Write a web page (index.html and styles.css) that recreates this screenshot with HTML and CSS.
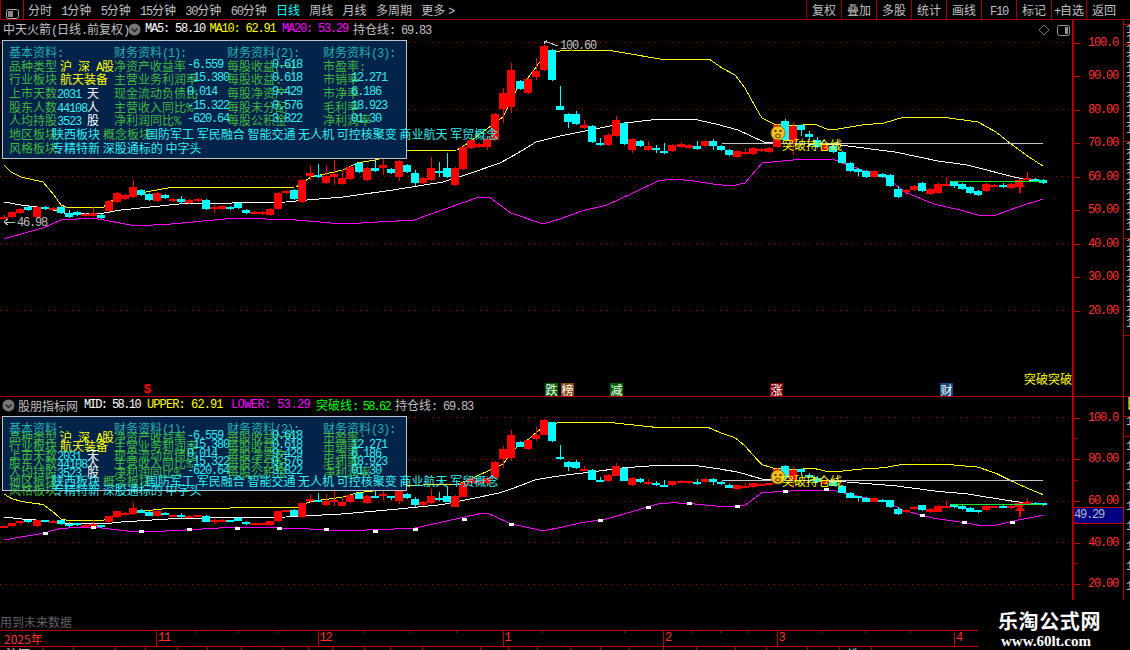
FILE: index.html
```html
<!DOCTYPE html>
<html lang="zh-CN">
<head>
    <meta charset="UTF-8">
    <title>中天火箭 K线</title>
    <link rel="stylesheet" href="styles.css">
</head>
<body>
    <div class="app">
        <!-- Top toolbar -->
        <div class="toolbar">
            <div class="toolbar-toggle">
                <svg width="13" height="10" viewBox="0 0 13 10"><rect x="0.5" y="0.5" width="12" height="9" rx="2" fill="none" stroke="#aaa"/><rect x="2" y="2" width="5" height="6" fill="#888"/></svg>
            </div>
            <div class="periods">
                <span>分时</span>
                <span><b>1</b>分钟</span>
                <span><b>5</b>分钟</span>
                <span><b>15</b>分钟</span>
                <span><b>30</b>分钟</span>
                <span><b>60</b>分钟</span>
                <span class="active">日线</span>
                <span>周线</span>
                <span>月线</span>
                <span>多周期</span>
                <span>更多 <b>&gt;</b></span>
            </div>
            <div class="actions">
                <span>复权</span>
                <span>叠加</span>
                <span>多股</span>
                <span>统计</span>
                <span>画线</span>
                <span><b>F10</b></span>
                <span>标记</span>
                <span><b>+</b>自选</span>
                <span>返回</span>
            </div>
        </div>

        <div class="workspace">
            <div class="panes">
                <!-- Main chart -->
                <div class="pane pane-main">
                    <div class="plot">
                        <svg class="chart" id="chartMain"></svg>
                        <div class="legend legend-main">
                            <span class="legend-title">中天火箭<b>(</b>日线<b>.</b>前复权<b>)</b></span>
                            <svg class="legend-icon" width="13" height="13" viewBox="0 0 13 13"><circle cx="6.5" cy="6.5" r="6" fill="#777"/><path d="M3.5 5.5 L6.5 8.5 L9.5 5.5" fill="none" stroke="#222" stroke-width="1.5"/></svg>
                            <b class="item-ma5 c-white">MA5: 58.10</b>
                            <b class="item-ma10 c-yellow">MA10: 62.91</b>
                            <b class="item-ma20 c-magenta">MA20: 53.29</b>
                            <span class="c-grey">持仓线<b>: 69.83</b></span>
                        </div>
                        <div class="chart-tools">
                            <svg width="12" height="12" viewBox="0 0 12 12"><path d="M6 1 L11 6 L6 11 L1 6 Z" fill="none" stroke="#777"/></svg>
                            <svg width="13" height="11" viewBox="0 0 13 11"><rect x="0.5" y="0.5" width="12" height="10" rx="2" fill="none" stroke="#999"/><rect x="8" y="2" width="3" height="7" fill="#999"/></svg>
                        </div>
                        <div class="panel" id="infoPanel">
                            <div class="panel-row heading">
                                <span>基本资料<b>:</b></span><span></span>
                                <span>财务资料<b>(1):</b></span><span></span>
                                <span>财务资料<b>(2):</b></span><span></span>
                                <span>财务资料<b>(3):</b></span>
                            </div>
                            <div class="panel-row">
                                <span class="lbl">品种类型</span><span class="val-name">沪<b> </b>深<b> A</b>股</span>
                                <span class="lbl">净资产收益率</span><b class="val">-6.559</b>
                                <span class="lbl">每股收益(一)</span><b class="val">0.618</b>
                                <span class="lbl">市盈率<b>:</b></span>
                            </div>
                            <div class="panel-row">
                                <span class="lbl">行业板块</span><span class="val-name">航天装备</span>
                                <span class="lbl">主营业务利润率</span><b class="val">-15.380</b>
                                <span class="lbl">每股收益<b>:</b></span><b class="val">0.618</b>
                                <span class="lbl">市销率</span><b class="val">12.271</b>
                            </div>
                            <div class="panel-row">
                                <span class="lbl">上市天数</span><span><b class="val">2031 </b><span class="unit">天</span></span>
                                <span class="lbl">现金流动负债比</span><b class="val">0.014</b>
                                <span class="lbl">每股净资产</span><b class="val">9.429</b>
                                <span class="lbl">市净率</span><b class="val">6.186</b>
                            </div>
                            <div class="panel-row">
                                <span class="lbl">股东人数</span><span><b class="val">44108</b><span class="unit">人</span></span>
                                <span class="lbl">主营收入同比<b>%</b></span><b class="val">-15.322</b>
                                <span class="lbl">每股未分配</span><b class="val">0.576</b>
                                <span class="lbl">毛利率</span><b class="val">18.923</b>
                            </div>
                            <div class="panel-row">
                                <span class="lbl">人均持股</span><span><b class="val">3523 </b><span class="unit">股</span></span>
                                <span class="lbl">净利润同比<b>%</b></span><b class="val">-620.64</b>
                                <span class="lbl">每股公积金</span><b class="val">3.822</b>
                                <span class="lbl">净利润率</span><b class="val">01.30</b>
                            </div>
                            <div class="panel-row panel-row-wide">
                                <span class="lbl">地区板块</span><span class="val">陕西板块</span>
                                <span class="lbl">概念板块</span><span class="val">国防军工 军民融合 智能交通 无人机 可控核聚变 商业航天 军贸概念</span>
                            </div>
                            <div class="panel-row panel-row-wide">
                                <span class="lbl">风格板块</span><span class="val">专精特新 深股通标的 中字头</span>
                            </div>
                        </div>
                        <span class="break-tag">突破突破</span>
                    </div>
                    <div class="axis" id="axisMain"></div>
                </div>

                <!-- Indicator chart -->
                <div class="pane pane-sub">
                    <div class="plot">
                        <svg class="chart" id="chartSub"></svg>
                        <div class="legend legend-sub">
                            <svg class="legend-icon" width="13" height="13" viewBox="0 0 13 13"><circle cx="6.5" cy="6.5" r="6" fill="#777"/><path d="M3.5 5.5 L6.5 8.5 L9.5 5.5" fill="none" stroke="#222" stroke-width="1.5"/></svg>
                            <span class="legend-title item-name">股朋指标网</span>
                            <b class="item-mid c-white">MID: 58.10</b>
                            <b class="item-upper c-yellow">UPPER: 62.91</b>
                            <b class="item-lower c-magenta">LOWER: 53.29</b>
                            <span class="item-break c-green">突破线<b>: 58.62</b></span>
                            <span class="c-grey">持仓线<b>: 69.83</b></span>
                        </div>
                        <div class="panel panel-squashed" id="infoPanelSub"></div>
                        <span class="future-note">用到未来数据</span>
                    </div>
                    <div class="axis" id="axisSub">
                        <b class="cursor-price">49.29</b>
                    </div>
                </div>
            </div>
            <div class="side" id="side"></div>
        </div>

        <!-- Time axis -->
        <div class="timebar" id="timebar">
            <span class="month month-first">2025年</span>
            <b class="month month-11">11</b>
            <b class="month month-12">12</b>
            <b class="month month-1">1</b>
            <b class="month month-2">2</b>
            <b class="month month-3">3</b>
            <b class="month month-4">4</b>
        </div>
        <div class="statusbar" id="statusbar"></div>

        <div class="watermark">
            <div class="watermark-title">乐淘公式网</div>
            <div class="watermark-url">www.60lt.com</div>
        </div>
    </div>

    <script src="chart.js"></script>
</body>
</html>
```

FILE: styles.css
```css
* {
    box-sizing: border-box;
}
body {
    margin: 0;
    background: #000;
    color: #c0c0c0;
    font-family: "Noto Sans CJK SC", "Liberation Sans", sans-serif;
    font-size: 12px;
    overflow: hidden;
}
/* Half-width latin and digits, the way the terminal font draws them */
b {
    font-family: "Liberation Mono", monospace;
    font-weight: normal;
    letter-spacing: -1.2px;
    white-space: pre;
}
.app {
    position: relative;
    width: 1130px;
    height: 650px;
    overflow: hidden;
}
/* Toolbar */
.toolbar {
    display: flex;
    height: 20px;
    line-height: 19px;
    border-bottom: 1px solid #a00000;
    white-space: nowrap;
}
.toolbar-toggle {
    width: 24px;
    padding: 4px 0 0 5px;
    border-left: 1px solid #a00000;
    border-right: 1px solid #c00000;
}
.periods {
    display: flex;
    gap: 9.3px;
    padding-left: 4px;
}
.periods .active {
    color: #00ffff;
}
.actions {
    display: flex;
    margin-left: auto;
    padding-right: 9px;
}
.actions span {
    width: 35px;
    text-align: center;
    border-left: 1px solid #a00000;
}
/* Panes */
.workspace {
    display: flex;
    height: 610px;
}
.panes {
    width: 1123px;
}
.pane {
    display: flex;
    position: relative;
}
.pane-main {
    height: 377px;
    border-bottom: 1px solid #b00000;
}
.pane-sub {
    height: 233px;
}
.plot {
    position: relative;
    width: 1072px;
    overflow: hidden;
}
.chart {
    position: absolute;
    left: 0;
    top: 0;
    width: 1072px;
    height: 100%;
}
.legend {
    position: relative;
    display: flex;
    align-items: center;
    white-space: nowrap;
}
.legend-main {
    height: 18px;
    padding-left: 3px;
}
.legend-main .legend-icon {
    margin: 0 4px 0 5px;
}
.legend-sub {
    height: 16px;
    padding-left: 2px;
}
.legend-sub .legend-icon {
    margin-right: 3px;
}
.legend-title {
    width: 120px;
}
.item-name { width: 66px; }
.item-ma5 { width: 64.5px; }
.item-ma10 { width: 72.5px; }
.item-ma20 { width: 71px; }
.item-mid { width: 63px; letter-spacing: -1.6px; }
.item-upper { width: 84px; letter-spacing: -0.9px; }
.item-lower { width: 85px; letter-spacing: -0.6px; }
.item-break { width: 79px; }
.item-break b { letter-spacing: -1.8px; }
.c-white { color: #fff; }
.c-yellow { color: #ffff00; }
.c-magenta { color: #ff00ff; }
.c-green { color: #00ff00; }
.c-grey { color: #c0c0c0; }
.chart-tools {
    position: absolute;
    top: 4px;
    left: 1038px;
    display: flex;
    align-items: center;
    gap: 7px;
}
/* Info panel over the candles */
.panel {
    position: absolute;
    left: 2px;
    top: 20px;
    width: 405px;
    height: 119px;
    padding: 4px 0 0 6px;
    background: #02234a;
    border: 1px solid #bcc4cc;
    color: #30f0f0;
}
.panel-row {
    display: grid;
    grid-template-columns: 48px 57px 73px 40px 45px 51px 28px auto;
    height: 13.7px;
    line-height: 13.7px;
    white-space: nowrap;
}
.panel-row-wide {
    grid-template-columns: 43px 51px 43px auto;
}
.panel-row-wide + .panel-row-wide {
    grid-template-columns: 43px auto;
}
.panel-squashed {
    top: 19px;
    height: 75px;
}
.panel-squashed .panel-row {
    height: 8.86px;
}
.heading {
    color: #20b0b0;
}
.lbl {
    color: #40b840;
}
.val {
    color: #30f0f0;
}
span.val {
    letter-spacing: 0;
}
.val-name {
    padding-left: 3px;
    color: #ffff00;
}
.unit {
    color: #fff;
}
.break-tag {
    position: absolute;
    right: 0;
    top: 350px;
    color: #ffff00;
}
.future-note {
    position: absolute;
    left: 0;
    bottom: 0;
    line-height: 16px;
    color: #606060;
}
/* Badges along the bottom of the main chart */
.badge {
    position: absolute;
    top: 363px;
    width: 13px;
    height: 13px;
    line-height: 13px;
    text-align: center;
    color: #fff;
}
.badge-drop { background: #006400; }
.badge-rank { background: #8a4a10; }
.badge-cut { background: #006400; }
.badge-rise { background: #800000; }
.badge-money { background: #104a80; }
.badge-dollar {
    color: #ff0000;
    font-family: "Liberation Mono", monospace;
    font-weight: bold;
    font-size: 13px;
}
/* Price axis */
.axis {
    position: relative;
    width: 51px;
    border-left: 2px solid #b00000;
}
.axis-tick {
    position: absolute;
    left: 0;
    height: 1px;
    background: #c00000;
}
.axis-label {
    position: absolute;
    left: 14px;
    line-height: 14px;
    color: #ff3232;
}
.cursor-price {
    position: absolute;
    left: 0;
    top: 110px;
    width: 49px;
    height: 17px;
    line-height: 15px;
    background: #000080;
    border-top: 1px solid #c00000;
    border-bottom: 1px solid #c00000;
    color: #b8b8c8;
}
/* Clipped list at the far right */
.side {
    width: 7px;
    height: 580px;
    overflow: hidden;
    border-left: 1px solid #b00000;
}
.side-section {
    padding-left: 2px;
    overflow: hidden;
    border-bottom: 1px solid #b00000;
    color: #c0c0c0;
    line-height: 10px;
}
.side-section b {
    display: block;
}
.side-flag {
    color: #ffff00;
    font-size: 14px;
}
.side-rows {
    border-bottom: 0;
    line-height: 20px;
}
/* Time axis */
.timebar {
    position: relative;
    display: flex;
    height: 17px;
    line-height: 15px;
    width: 978px;
    color: #ff3232;
    border-top: 1px solid #c00000;
    border-bottom: 1px solid #c00000;
}
.month {
    padding-left: 1px;
    border-left: 1px solid #c00000;
}
.month-first { width: 156px; padding-left: 4px; border-left: 0; }
.month-11 { width: 161.5px; }
.month-12 { width: 185px; }
.month-1 { width: 160.5px; }
.month-2 { width: 113.5px; }
.month-3 { width: 177.5px; }
.month-4 { width: 24px; }
.time-tick {
    position: absolute;
    top: 0;
    width: 1px;
    height: 2px;
    background: #c00000;
}
.statusbar {
    position: relative;
    height: 4px;
    overflow: hidden;
}
.status-cell {
    position: absolute;
    top: 0;
    width: 1px;
    height: 4px;
    background: #c00000;
}
.status-text {
    position: absolute;
    top: 1px;
    line-height: 12px;
    color: #e0e0e0;
}
.status-text-cyan {
    color: #80ffff;
}
/* Watermark */
.watermark {
    position: absolute;
    left: 978px;
    top: 600px;
    right: 0;
    bottom: 0;
    padding: 9px 0 0 20px;
    background: #000;
    color: #fff;
}
.watermark-title {
    font-size: 20px;
    font-weight: bold;
    line-height: 24px;
    letter-spacing: 0.6px;
}
.watermark-url {
    padding: 1px 0 0 3px;
    font-family: "Liberation Serif", serif;
    font-size: 15px;
    font-weight: bold;
    line-height: 15px;
}
/* SVG annotations */
.chart-price {
    fill: #c0c0c0;
    font-family: "Liberation Mono", monospace;
    font-size: 12px;
    letter-spacing: -1.2px;
}
.chart-note {
    fill: #ffff00;
    font-size: 12px;
}
```

FILE: chart.js
```js
// All y values below are pixels in the main pane, the sub pane is scaled from them
const SVG_NS = "http://www.w3.org/2000/svg";
const RED = "#ff0000";
const CYAN = "#00ffff";

// [colour, body top, body bottom, wick top, wick bottom]
const candles = [
    ["r",216.5,217.5,215,219],["r",212,217],["r",209,213],["c",207,210],["r",207,217],["c",207,209],["r",208,209],["c",207,213],
    ["c",213,217,210,218],["c",212,215],["r",214,216],["r",213,216,207,217],["c",215,218],["r",201,211],["r",193,202],["r",195,199],
    ["r",187,197,180,198],["c",190,195],["c",194,200],["r",193,201],["c",195,198],["r",199,201],["c",199,202,196,204],["r",200,203],
    ["r",199,201],["c",200,209],["r",207,209,205,213],["r",206,209],["c",207,209],["c",203,208],["c",210,213],["r",212,213],
    ["r",212,214],["r",209,215],["r",193,209],["r",191,193],["c",190,199],["r",180,202],["r",173,176,165,180],["c",175,177,164,178],
    ["r",176,183,165,184],["r",174,177,160,185],["r",178,184,170,185],["r",167,179],["c",163,172],["r",168,180],["c",168,171,160,172],["r",165,168,157,175],
    ["c",169,173],["r",161,177,160,181],["c",165,172],["c",173,183,170,186],["r",178,183],["r",168,180,157,181],["c",171,172,162,177],["c",168,177,153,178],
    ["r",168,185],["r",147,169],["r",140,148],["r",144,147],["r",139,147,136,150],["r",114,140],["r",93,109,88,123],["r",70,107,63,113],
    ["c",81,89,80,90],["r",79,93],["r",71,77,58,80],["r",46,70],["c",50,80],["c",106,110,86,110],
    ["c",114,122,113,128],["c",114,124,111,125],["r",125,128,120,129],["c",126,142],["c",143,145,138,146],["r",135,145,133,146],["r",120,136,116,137],["c",123,144],
    ["r",139,150,138,153],["c",141,146],["r",146,150,141,151],["c",148,150,145,153],["c",151,153,143,154],["r",145,151],["r",144,147,142,148],["r",145,148],
    ["c",146,149,141,150],["r",141,146],["c",141,146,139,150],["c",146,150],["c",150,155],["r",151,157],["r",152,153,148,155],["r",148,154],
    ["r",149,151],["r",148,152],["r",125,147],["c",121,140,119,141],["r",126,142,122,155],["c",125,130,124,136],["c",134,137,131,140],["c",140,147,137,148],
    ["r",145,150],["c",146,152],["c",152,163],["c",163,171],["c",169,172,168,176],["c",171,177],["r",171,177],["c",174,177,173,178],
    ["c",175,186],["c",189,197,186,198],["r",190,192,189,195],["r",186,190],["c",183,191],["r",189,194],["r",184,193],["r",184,185,177,186],
    ["c",181,186,181,188],["c",184,189],["c",187,193],["c",191,195],["r",184,191],["r",185,186],["c",185,187,183,188],["r",184,188],
    ["r",180,187],["r",178,179,172,180],["c",179,181],["c",180,183]
];

const upperLine = [[4,165],[11,172],[21,177],[43,182],[54,195],[61,205],[66,207],[104,207],[107,202],[146,192],[168,188],[296,187],[311,177],[343,170],[357,163],[375,160],[407,151],[457,150],[468,143],[503,117],[518,87],[528,78],[539,63],[550,52],[560,51],[571,50],[613,51],[625,53],[660,59],[709,59],[722,68],[735,75],[745,88],[756,108],[762,118],[774,124],[793,126],[814,124],[827,129],[838,129],[862,125],[884,123],[904,117],[942,117],[978,122],[996,132],[1011,144],[1029,157],[1043,166]];
const midLine = [[4,202],[21,205],[46,208],[64,213],[104,213],[121,210],[179,204],[286,202],[307,200],[343,197],[393,190],[443,182],[471,173],[500,163],[518,153],[536,142],[560,136],[585,131],[625,123],[660,119],[693,119],[716,124],[738,130],[764,142],[778,143],[840,145],[895,152],[938,161],[967,165],[1014,177],[1029,180],[1043,182]];
const lowerLine = [[4,239],[21,234],[43,228],[61,220],[93,218],[136,226],[171,224],[236,218],[296,220],[343,224],[414,220],[479,197],[489,197],[511,213],[543,224],[560,219],[582,211],[607,205],[633,193],[658,181],[673,179],[694,181],[713,184],[731,186],[745,183],[762,163],[793,160],[833,159],[840,162],[862,170],[887,178],[905,192],[934,204],[960,210],[978,215],[996,215],[1018,207],[1043,199]];
// White squares on the lower band, sub pane pixels
const bandMarks = [[45,533],[93,527],[141,531],[189,529],[237,528],[279,528],[326,529],[375,531],[415,529],[464,519],[511,524],[600,520],[648,507],[689,503],[737,506],[785,491],[826,489],[922,515],[964,522],[1012,522]];

function add(svg, name, attrs, text) {
    const el = document.createElementNS(SVG_NS, name);
    for (const key in attrs) el.setAttribute(key, attrs[key]);
    if (text) el.textContent = text;
    svg.appendChild(el);
    return el;
}

function drawLine(svg, points, toY, color, width) {
    add(svg, "polyline", {
        points: points.map(p => p[0] + "," + toY(p[1]).toFixed(1)).join(" "),
        fill: "none",
        stroke: color,
        "stroke-width": width
    });
}

function drawSmiley(svg, cx, cy) {
    const g = add(svg, "g", { "shape-rendering": "auto" });
    add(g, "circle", { cx: cx, cy: cy, r: 7, fill: "#f0c020", stroke: "#a87808" });
    add(g, "rect", { x: cx - 3.5, y: cy - 3, width: 2, height: 2, fill: "#5a3a00" });
    add(g, "rect", { x: cx + 1.5, y: cy - 3, width: 2, height: 2, fill: "#5a3a00" });
    add(g, "ellipse", { cx: cx, cy: cy + 3, rx: 2.5, ry: 1.8, fill: "none", stroke: "#5a3a00" });
}

function drawArrow(svg, x, tip, tail) {
    add(svg, "polygon", { points: `${x},${tip} ${x - 5},${tip + 6} ${x + 5},${tip + 6}`, fill: RED });
    add(svg, "rect", { x: x - 1, y: tip + 5, width: 2, height: tail - tip - 5, fill: RED });
}

// Page y values are passed in and moved to the pane's own origin here
function drawPane(pane) {
    const svg = document.getElementById(pane.id);
    svg.setAttribute("shape-rendering", "crispEdges");
    const origin = pane.origin;
    const toY = y => pane.toPageY(y) - origin;

    pane.grid.forEach(y => {
        add(svg, "line", {
            x1: 0, x2: 1072, y1: y - origin + 0.5, y2: y - origin + 0.5,
            stroke: "#c00000", "stroke-dasharray": "1 5"
        });
    });

    drawLine(svg, upperLine, toY, "#ffff00", 1);
    drawLine(svg, midLine, toY, "#ffffff", 1);
    drawLine(svg, lowerLine, toY, "#ff00ff", 1);
    drawLine(svg, [[722,143.5],[1043,143.5]], toY, "#c8c8c8", 1);

    candles.forEach((c, i) => {
        const color = c[0] === "r" ? RED : CYAN;
        const x = Math.round(4.3 + 8.05 * i);
        const wickTop = c[3] === undefined ? c[1] - 1 : c[3];
        const wickBottom = c[4] === undefined ? c[2] + 1 : c[4];
        add(svg, "rect", { x: x, y: toY(wickTop), width: 1, height: toY(wickBottom) - toY(wickTop), fill: color });
        add(svg, "rect", {
            x: x - 4, y: Math.round(toY(c[1])), width: 8,
            height: Math.max(2, Math.round(toY(c[2]) - toY(c[1]))), fill: color
        });
    });

    drawLine(svg, [[951,181.5],[1043,181.5]], toY, "#20e020", 1);
    drawArrow(svg, 1020, pane.arrow[0] - origin, pane.arrow[1] - origin);
    drawSmiley(svg, 778, pane.smileyY - origin);
    add(svg, "text", { x: 782, y: pane.noteY - origin, class: "chart-note" }, "突破持仓线");
    return svg;
}

function drawAxis(id, origin, prices, priceToY, labelled) {
    const axis = document.getElementById(id);
    prices.forEach(p => {
        const y = Math.round(priceToY(p)) - origin;
        const on = labelled.includes(p);
        const tick = document.createElement("div");
        tick.className = "axis-tick";
        tick.style.top = y + "px";
        tick.style.width = (on ? 6 : 3) + "px";
        axis.appendChild(tick);
        if (on) {
            const label = document.createElement("b");
            label.className = "axis-label";
            label.style.top = (y - 7) + "px";
            label.textContent = p === 100 ? "100.0" : p.toFixed(2);
            axis.appendChild(label);
        }
    });
}

// Main pane
const priceTicks = [100, 90, 80, 70, 60, 50, 40, 30, 20];
const mainSvg = drawPane({
    id: "chartMain", origin: 20, toPageY: y => y,
    grid: [42, 109, 176, 243, 310], arrow: [181, 193], smileyY: 133, noteY: 150
});
drawAxis("axisMain", 20, priceTicks, p => 42.5 + (100 - p) * 3.35, priceTicks);

add(mainSvg, "path", { d: "M544 24 L546 21 M544 24 L547 20 M544 21 L558 26", fill: "none", stroke: "#c0c0c0" });
add(mainSvg, "text", { x: 560, y: 29, class: "chart-price" }, "100.60");
add(mainSvg, "path", { d: "M8 199 L4 202 L8 205 M4 202 L15 202", fill: "none", stroke: "#c0c0c0" });
add(mainSvg, "text", { x: 17, y: 206, class: "chart-price" }, "46.98");

// Sub pane
const subSvg = drawPane({
    id: "chartSub", origin: 397, toPageY: y => 417.5 + (y - 42.5) * 0.624,
    grid: [417, 459, 501, 542, 584], arrow: [505, 517], smileyY: 477, noteY: 486
});
drawAxis("axisSub", 397, priceTicks, p => 417.5 + (100 - p) * 2.085, [100, 80, 60, 40, 20]);
bandMarks.forEach(m => {
    add(subSvg, "rect", { x: m[0] - 2, y: m[1] - 397 - 1, width: 5, height: 3, fill: "#fff" });
});

// Same text in the sub pane, only squashed by the row height
document.getElementById("infoPanelSub").innerHTML = document.getElementById("infoPanel").innerHTML;

// Signal badges
const plot = document.querySelector(".pane-main .plot");
[
    ["$", 141, "badge-dollar"], ["跌", 545, "badge-drop"], ["榜", 561, "badge-rank"],
    ["减", 610, "badge-cut"], ["涨", 770, "badge-rise"], ["财", 940, "badge-money"]
].forEach(item => {
    const badge = document.createElement("span");
    badge.className = "badge " + item[2];
    badge.style.left = item[1] + "px";
    badge.textContent = item[0];
    plot.appendChild(badge);
});

// Clipped list on the far right
const side = document.getElementById("side");
[[5,0],[20,2],[97,9],[97,9],[97,9],[61,0],[20,-1],[20,1],[163,-8]].forEach(s => {
    const section = document.createElement("div");
    section.className = "side-section";
    section.style.height = s[0] + "px";
    if (s[1] === -1) {
        section.innerHTML = '<span class="side-flag">日</span>';
    } else if (s[1] < 0) {
        section.classList.add("side-rows");
        section.innerHTML = "<b>1</b>".repeat(-s[1]);
    } else {
        section.innerHTML = "<b>11.25</b>".repeat(s[1]);
    }
    side.appendChild(section);
});

// Small ticks on the time axis and the cut-off row below it
const timebar = document.getElementById("timebar");
[196,237,277,363,410,456,542,624,691,720,748,821,865,910].forEach(x => {
    const tick = document.createElement("div");
    tick.className = "time-tick";
    tick.style.left = x + "px";
    timebar.appendChild(tick);
});
const statusbar = document.getElementById("statusbar");
[43,73,115,145,177,207,241,282,308,332,364,390,422,480,508,537,570,600,629,663,696,735,766,807,839,871].forEach(x => {
    const cell = document.createElement("div");
    cell.className = "status-cell";
    cell.style.left = x + "px";
    statusbar.appendChild(cell);
});
[["沪深",6,""],["选",848,"status-text-cyan"]].forEach(item => {
    const text = document.createElement("span");
    text.className = "status-text " + item[2];
    text.style.left = item[1] + "px";
    text.textContent = item[0];
    statusbar.appendChild(text);
});
```
